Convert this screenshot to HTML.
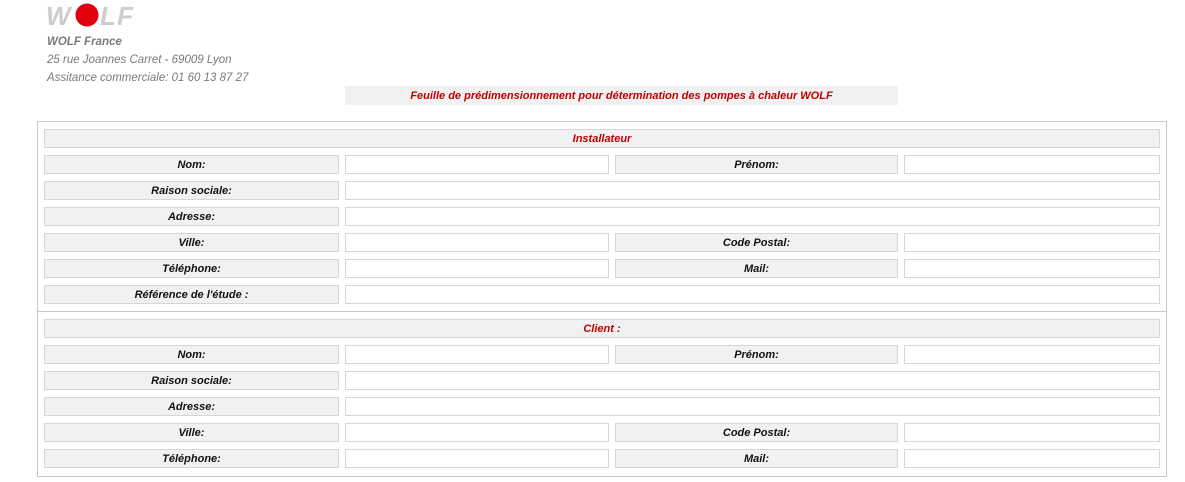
<!DOCTYPE html>
<html><head><meta charset="utf-8"><style>
*{margin:0;padding:0;box-sizing:border-box}
body{width:1185px;height:482px;background:#fff;position:relative;overflow:hidden;font-family:"Liberation Sans",sans-serif}
.a{position:absolute}
.t{font-style:italic;color:#7a7a7a;font-size:11.5px}
.l,.i,.h{position:absolute;height:19px;border:1px solid #d6d6d6}
.l,.h{background:#f1f1f1;text-align:center;font-style:italic;font-weight:bold;font-size:11px;line-height:19px;color:#111}
.h{color:#c00000;font-weight:bold}
.i{background:#fff}
</style></head><body>
<svg class="a" style="left:46px;top:2px" width="90" height="26" viewBox="0 0 90 26">
<text x="0" y="23" font-family="Liberation Sans" font-weight="bold" font-style="italic" font-size="26" fill="#cdcdcd" textLength="30">W</text>
<circle cx="41" cy="13" r="11.5" fill="#e2000f"/>
<text x="54" y="23" font-family="Liberation Sans" font-weight="bold" font-style="italic" font-size="26" fill="#cdcdcd" textLength="33">LF</text>
</svg>
<div class="a t" style="left:47px;top:36px;font-weight:bold">WOLF France</div>
<div class="a t" style="left:47px;top:54px">25 rue Joannes Carret - 69009 Lyon</div>
<div class="a t" style="left:47px;top:72px">Assitance commerciale: 01 60 13 87 27</div>
<div class="a" style="left:345px;top:86px;width:553px;height:19px;background:#f1f1f1;color:#c00000;font-style:italic;font-weight:bold;font-size:11px;text-align:center;line-height:21px">Feuille de prédimensionnement pour détermination des pompes à chaleur WOLF</div>
<div class="a" style="left:37px;top:121px;width:1130px;height:356px;border:1px solid #c8c8c8"></div>
<div class="a" style="left:37px;top:311px;width:1130px;height:1px;background:#c8c8c8"></div>

<div class="h" style="left:44px;top:129px;width:1116px">Installateur</div>
<div class="l" style="left:44px;top:155px;width:295px">Nom:</div><div class="i" style="left:345px;top:155px;width:264px"></div>
<div class="l" style="left:615px;top:155px;width:283px">Prénom:</div><div class="i" style="left:904px;top:155px;width:256px"></div>
<div class="l" style="left:44px;top:181px;width:295px">Raison sociale:</div><div class="i" style="left:345px;top:181px;width:815px"></div>
<div class="l" style="left:44px;top:207px;width:295px">Adresse:</div><div class="i" style="left:345px;top:207px;width:815px"></div>
<div class="l" style="left:44px;top:233px;width:295px">Ville:</div><div class="i" style="left:345px;top:233px;width:264px"></div>
<div class="l" style="left:615px;top:233px;width:283px">Code Postal:</div><div class="i" style="left:904px;top:233px;width:256px"></div>
<div class="l" style="left:44px;top:259px;width:295px">Téléphone:</div><div class="i" style="left:345px;top:259px;width:264px"></div>
<div class="l" style="left:615px;top:259px;width:283px">Mail:</div><div class="i" style="left:904px;top:259px;width:256px"></div>
<div class="l" style="left:44px;top:285px;width:295px">Référence de l'étude :</div><div class="i" style="left:345px;top:285px;width:815px"></div>

<div class="h" style="left:44px;top:319px;width:1116px">Client :</div>
<div class="l" style="left:44px;top:345px;width:295px">Nom:</div><div class="i" style="left:345px;top:345px;width:264px"></div>
<div class="l" style="left:615px;top:345px;width:283px">Prénom:</div><div class="i" style="left:904px;top:345px;width:256px"></div>
<div class="l" style="left:44px;top:371px;width:295px">Raison sociale:</div><div class="i" style="left:345px;top:371px;width:815px"></div>
<div class="l" style="left:44px;top:397px;width:295px">Adresse:</div><div class="i" style="left:345px;top:397px;width:815px"></div>
<div class="l" style="left:44px;top:423px;width:295px">Ville:</div><div class="i" style="left:345px;top:423px;width:264px"></div>
<div class="l" style="left:615px;top:423px;width:283px">Code Postal:</div><div class="i" style="left:904px;top:423px;width:256px"></div>
<div class="l" style="left:44px;top:449px;width:295px">Téléphone:</div><div class="i" style="left:345px;top:449px;width:264px"></div>
<div class="l" style="left:615px;top:449px;width:283px">Mail:</div><div class="i" style="left:904px;top:449px;width:256px"></div>
</body></html>
